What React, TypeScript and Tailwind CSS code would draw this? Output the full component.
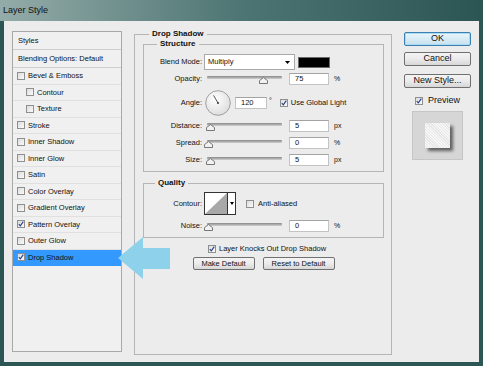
import React from 'react';

// Layer Style dialog (Photoshop, Windows 7 basic theme)

interface StyleRow {
  label: string;
  indent?: boolean;
  checked?: boolean;
  selected?: boolean;
}

const styleRows: StyleRow[] = [
  { label: 'Bevel & Emboss' },
  { label: 'Contour', indent: true },
  { label: 'Texture', indent: true },
  { label: 'Stroke' },
  { label: 'Inner Shadow' },
  { label: 'Inner Glow' },
  { label: 'Satin' },
  { label: 'Color Overlay' },
  { label: 'Gradient Overlay' },
  { label: 'Pattern Overlay', checked: true },
  { label: 'Outer Glow' },
  { label: 'Drop Shadow', checked: true, selected: true },
];

function Check({ checked = false }: { checked?: boolean }) {
  return (
    <div className="w-[8px] h-[8px] shrink-0 border border-[#8e8f8f] bg-linear-to-br from-[#dcdcdc] to-[#fbfbfb] flex items-center justify-center">
      {checked && (
        <svg width="6" height="6" viewBox="0 0 6 6">
          <path d="M0.8 3.2 L2.3 4.9 L5.3 0.6" fill="none" stroke="#26418a" strokeWidth="1.1" />
        </svg>
      )}
    </div>
  );
}

function Slider({ pos }: { pos: number }) {
  return (
    <div className="relative w-[75px] h-[12px] ml-[5px] shrink-0">
      <div className="absolute left-0 right-0 top-[3px] h-[3px] rounded-[1px] bg-linear-to-b from-[#888] to-[#d0d0d0]" />
      <svg className="absolute top-[4px]" style={{ left: pos - 4 }} width="9" height="7" viewBox="0 0 9 7">
        <path d="M4.5 0.5 L8.5 3.6 V6.5 H0.5 V3.6 Z" fill="#f1f1f1" stroke="#777" />
      </svg>
    </div>
  );
}

function Field({ value, narrow = false }: { value: string; narrow?: boolean }) {
  return (
    <div
      className={`${narrow ? 'w-[32px]' : 'w-[40px] ml-[7px]'} h-[12px] shrink-0 bg-white border border-[#c3c3c3] border-t-[#a3a3a3] pl-[5px] flex items-center text-[7.5px]`}
    >
      {value}
    </div>
  );
}

function Label({ children }: { children: React.ReactNode }) {
  return <span className="w-[58px] shrink-0 text-right text-[7.5px]">{children}</span>;
}

function Legend({ children, className }: { children: React.ReactNode; className: string }) {
  return (
    <span className={`absolute -top-[6px] px-[3px] bg-[#ececec] font-bold text-[8px] leading-[10px] ${className}`}>
      {children}
    </span>
  );
}

function SliderRow({ label, pos, value, unit, className = '' }: { label: string; pos: number; value: string; unit: string; className?: string }) {
  return (
    <div className={`flex items-center h-[12px] ${className}`}>
      <Label>{label}</Label>
      <Slider pos={pos} />
      <Field value={value} />
      <span className="ml-[5px] text-[7px]">{unit}</span>
    </div>
  );
}

function WinButton({ children, primary = false }: { children: React.ReactNode; primary?: boolean }) {
  return (
    <div
      className={`h-[14px] w-full rounded-[2px] border flex items-center justify-center text-[9px] ${
        primary
          ? 'border-[#3c7fb1] bg-linear-to-b from-[#eaf6fc] to-[#c6e1ee] shadow-[inset_0_0_0_1px_#a9dcf3]'
          : 'border-[#707070] bg-linear-to-b from-[#f4f4f4] via-[#ebebeb] to-[#d7d7d7]'
      }`}
    >
      {children}
    </div>
  );
}

function SmallButton({ children, className }: { children: React.ReactNode; className: string }) {
  return (
    <div className={`h-[13px] rounded-[2px] border border-[#707070] bg-linear-to-b from-[#f4f4f4] via-[#ebebeb] to-[#d7d7d7] flex items-center justify-center text-[7.5px] ${className}`}>
      {children}
    </div>
  );
}

export default function App() {
  return (
    <div className="relative w-[483px] h-[366px] bg-[#2c5654] flex flex-col overflow-hidden font-['Liberation_Sans',Arial,sans-serif] text-[#111]">
      {/* Title bar */}
      <div className="h-[21px] shrink-0 flex items-center pl-[3px] text-[9px] text-[#111] bg-linear-to-r from-[#94aca9] via-[#4d7573] to-[#2b5553]">
        Layer Style
      </div>

      {/* Client area */}
      <div className="flex-1 mx-[4px] mb-[4px] bg-[#ececec] flex items-start pt-[10px] pl-[8px]">
        {/* Styles list */}
        <div className="w-[110px] h-[321px] shrink-0 border border-[#a9a9a9] bg-[#f0f0f0] flex flex-col text-[7.5px]">
          <div className="h-[18px] flex items-center pl-[5px] border-b border-[#cfcfcf]">Styles</div>
          <div className="h-[18px] flex items-center pl-[5px] border-b border-[#cfcfcf]">Blending Options: Default</div>
          {styleRows.map((row) => (
            <div
              key={row.label}
              className={`h-[16.5px] flex items-center gap-[3px] border-b ${
                row.selected ? 'bg-[#3399ff] border-[#3399ff]' : 'border-[#e0e0e0]'
              } ${row.indent ? 'pl-[13px]' : 'pl-[4px]'}`}
            >
              <Check checked={row.checked} />
              <span>{row.label}</span>
            </div>
          ))}
        </div>

        {/* Drop Shadow group */}
        <div className="relative ml-[12px] mt-[3px] w-[258px] h-[321px] shrink-0 border border-[#b5b5b5] px-[8px] pt-[9px]">
          <Legend className="left-[14px]">Drop Shadow</Legend>

          {/* Structure */}
          <div className="relative w-[241px] border border-[#b5b5b5] pt-[9px] pb-[5px]">
            <Legend className="left-[13px]">Structure</Legend>

            <div className="flex items-center h-[16px]">
              <Label>Blend Mode:</Label>
              <div className="ml-[2px] w-[91px] h-[16px] bg-white border border-[#a9a9a9] flex items-center justify-between pl-[3px] pr-[4px] text-[7.5px]">
                <span>Multiply</span>
                <svg width="5" height="3" viewBox="0 0 5 3">
                  <path d="M0 0 H5 L2.5 3 Z" fill="#000" />
                </svg>
              </div>
              <div className="ml-[3px] w-[32px] h-[11px] bg-black border border-[#6a6a6a]" />
            </div>

            <SliderRow label="Opacity:" pos={56} value="75" unit="%" className="mt-[3px]" />

            <div className="flex items-center h-[26px] mt-[5px]">
              <Label>Angle:</Label>
              <svg className="ml-[3px] shrink-0" width="26" height="26" viewBox="0 0 26 26">
                <defs>
                  <radialGradient id="dial" cx="40%" cy="35%" r="70%">
                    <stop offset="0%" stopColor="#ffffff" />
                    <stop offset="100%" stopColor="#dcdcdc" />
                  </radialGradient>
                </defs>
                <circle cx="13" cy="13" r="12.3" fill="url(#dial)" stroke="#8d8d8d" strokeWidth="0.8" />
                <line x1="13" y1="13" x2="8.6" y2="5.4" stroke="#444" strokeWidth="0.9" />
                <circle cx="13" cy="13" r="1" fill="#333" />
              </svg>
              <div className="ml-[4px]">
                <Field value="120" narrow />
              </div>
              <span className="ml-[2px] text-[7px] -mt-[4px]">°</span>
              <div className="ml-[8px]">
                <Check checked />
              </div>
              <span className="ml-[3px] text-[7.5px]">Use Global Light</span>
            </div>

            <SliderRow label="Distance:" pos={3} value="5" unit="px" className="mt-[4px]" />
            <SliderRow label="Spread:" pos={1} value="0" unit="%" className="mt-[5px]" />
            <SliderRow label="Size:" pos={3} value="5" unit="px" className="mt-[5px]" />
          </div>

          {/* Quality */}
          <div className="relative w-[241px] mt-[11px] border border-[#b5b5b5] pt-[8px] pb-[5px]">
            <Legend className="left-[11px]">Quality</Legend>

            <div className="flex items-center h-[23px]">
              <Label>Contour:</Label>
              <div className="ml-[2px] w-[32px] h-[23px] border border-[#333] bg-white flex">
                <svg width="22" height="21" viewBox="0 0 22 21">
                  <path d="M0 21 L22 0 V21 Z" fill="#a8a8a8" />
                </svg>
                <div className="flex-1 border-l border-[#333] flex items-center justify-center">
                  <svg width="4" height="3" viewBox="0 0 4 3">
                    <path d="M0 0 H4 L2 3 Z" fill="#000" />
                  </svg>
                </div>
              </div>
              <div className="ml-[10px]">
                <Check />
              </div>
              <span className="ml-[4px] text-[7.5px]">Anti-aliased</span>
            </div>

            <SliderRow label="Noise:" pos={1} value="0" unit="%" className="mt-[5px]" />
          </div>

          <div className="flex items-center h-[10px] mt-[6px] pl-[65px] gap-[3px]">
            <Check checked />
            <span className="text-[7.5px]">Layer Knocks Out Drop Shadow</span>
          </div>

          <div className="flex justify-center gap-[8px] mt-[3px] w-[241px]">
            <SmallButton className="w-[62px]">Make Default</SmallButton>
            <SmallButton className="w-[72px]">Reset to Default</SmallButton>
          </div>
        </div>

        {/* Buttons column */}
        <div className="ml-[12px] mt-[1px] w-[67px] shrink-0 flex flex-col items-center">
          <WinButton primary>OK</WinButton>
          <div className="mt-[6px] w-full">
            <WinButton>Cancel</WinButton>
          </div>
          <div className="mt-[8px] w-full">
            <WinButton>New Style...</WinButton>
          </div>
          <div className="mt-[8px] h-[10px] flex items-center gap-[5px] text-[9px]">
            <Check checked />
            <span>Preview</span>
          </div>
          <div className="mt-[5px] w-[51px] h-[49px] bg-[#d6d6d6] border border-[#c6c6c6] flex items-center justify-center">
            <div className="w-[25px] h-[25px] -mt-[1px] -ml-[1px] bg-[repeating-linear-gradient(45deg,#f7f7f7_0px,#f7f7f7_1px,#e6e6e6_1px,#e6e6e6_2px)] shadow-[3px_3px_3px_rgba(0,0,0,0.55)]" />
          </div>
        </div>
      </div>

      {/* Callout arrow pointing at the selected style */}
      <svg className="absolute left-[117px] top-[236px]" width="55" height="45" viewBox="0 0 55 45">
        <path d="M1 22 L26 1 V12 H53 V33 H26 V43 Z" fill="#8dd2ea" />
      </svg>
    </div>
  );
}
